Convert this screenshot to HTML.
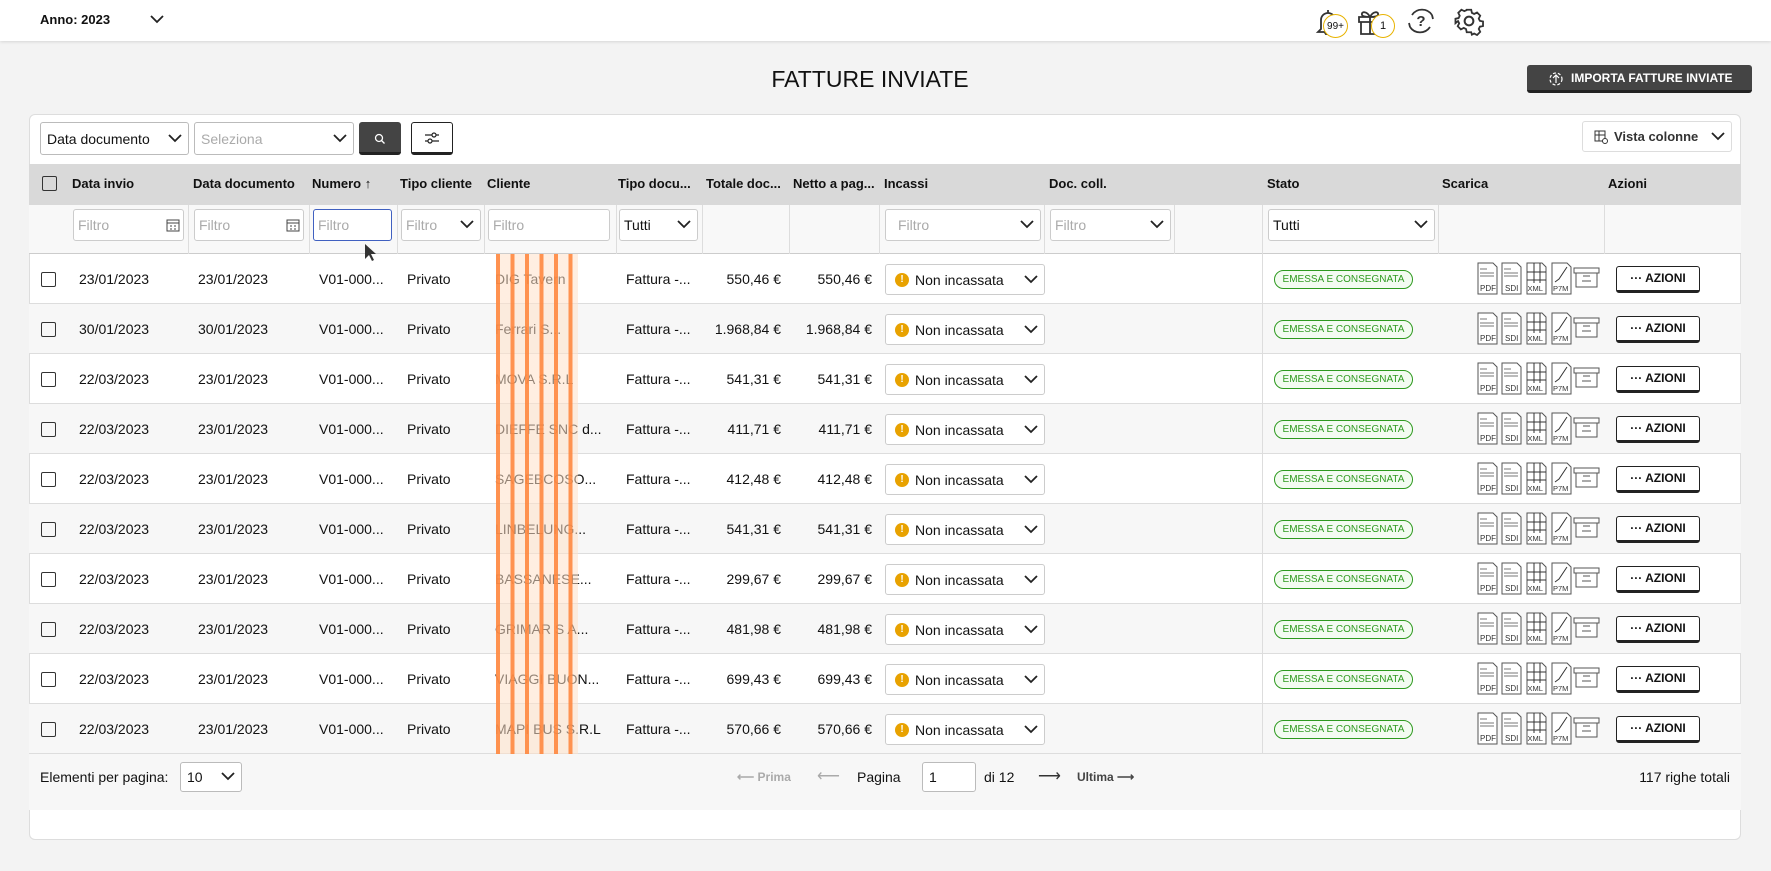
<!DOCTYPE html><html><head><meta charset="utf-8"><style>
*{box-sizing:border-box;margin:0;padding:0}
body{width:1771px;height:871px;overflow:hidden;background:#f3f3f3;font-family:"Liberation Sans",sans-serif;color:#111;position:relative}
.a{position:absolute}
.top{left:0;top:0;width:1771px;height:41px;background:#fff;box-shadow:0 1px 3px rgba(0,0,0,.12)}
.badge{position:absolute;border:1.5px solid #e8b300;background:#fff;border-radius:50%;font-size:10px;display:flex;align-items:center;justify-content:center}
.card{left:29px;top:114px;width:1712px;height:726px;background:#fff;border:1px solid #ddd;border-radius:6px}
.sel{position:absolute;border:1px solid #bbb;border-radius:3px;background:#fff;font-size:14px;display:flex;align-items:center;padding-left:6px}
.chev{position:absolute;right:6px;top:50%;margin-top:-6px}
.hdr{left:29px;top:164px;width:1712px;height:41px;background:#d9d9d9}
.h{position:absolute;top:176px;font-size:13px;font-weight:bold}
.frow{left:29px;top:205px;width:1712px;height:49px;background:#f8f8f8;border-bottom:1px solid #ccc}
.vl{position:absolute;top:205px;width:1px;height:49px;background:#ddd}
.fi{position:absolute;top:209px;height:32px;border:1px solid #ccc;border-radius:3px;background:#fff;font-size:14px;color:#aaa;padding-left:4px;display:flex;align-items:center}
.row{position:absolute;left:29px;width:1712px;height:50px;border-bottom:1px solid #ddd;font-size:14px}
.row.g{background:#f7f7f7}
.row span{position:absolute;top:17px;white-space:nowrap}
.cb{position:absolute;left:12px;top:18px;width:15px;height:15px;border:1.5px solid #333;border-radius:2px}
.inc{position:absolute;left:856px;top:10px;width:160px;height:31px;border:1px solid #ccc;border-radius:3px;background:#fff}
.inc i{position:absolute;left:9px;top:8px;width:14px;height:14px;border-radius:50%;background:#e8a200;color:#fff;font-size:10px;font-style:normal;font-weight:bold;text-align:center;line-height:14px}
.inc b{position:absolute;left:29px;top:7px;font-weight:normal}
.pill{position:absolute;left:1245px;top:16px;width:139px;height:19px;border:1px solid #2e9a1f;border-radius:10px;color:#2e9a1f;font-size:10px;text-align:center;line-height:17px;background:#f3fbf1}
.ic{position:absolute;left:1448px;top:8px}
.az{position:absolute;left:1587px;top:12px;width:84px;height:27px;border:1.5px solid #222;border-bottom-width:3px;border-radius:3px;background:#fff;font-size:12px;font-weight:bold;text-align:center;line-height:23px}
.r{text-align:right}
.stripes{position:absolute;left:496px;top:254px;width:82px;height:502px;background:repeating-linear-gradient(90deg,rgba(255,140,70,.95) 0 4px,rgba(255,225,200,.55) 4px 14.5px)}
.foot{left:29px;top:754px;width:1712px;height:56px;background:#f7f7f7}
</style></head><body>
<div class="a top"></div>
<div class="a" style="left:40px;top:12px;font-size:13px;font-weight:bold">Anno: 2023</div>
<svg class="a" style="left:150px;top:14px" width="14" height="10"><path d="M1 2l6 6 6-6" fill="none" stroke="#222" stroke-width="1.8"/></svg>
<svg class="a" style="left:1313px;top:7px" width="30" height="28"><path d="M8 22V13a7 7 0 0 1 14 0v9l3 3H5z M12 25a3 3 0 0 0 6 0 M15 3v3" fill="none" stroke="#333" stroke-width="1.8"/></svg>
<div class="badge" style="left:1323px;top:14px;width:25px;height:24px">99+</div>
<svg class="a" style="left:1356px;top:6px" width="28" height="30"><path d="M3 11h22v5H3z M5 16v12h18V16 M14 11v17 M14 11c-3-6-9-6-8-2 1 2 8 2 8 2c3-6 9-6 8-2-1 2-8 2-8 2" fill="none" stroke="#333" stroke-width="1.8"/></svg>
<div class="badge" style="left:1371px;top:14px;width:24px;height:24px;font-size:11px">1</div>
<svg class="a" style="left:1406px;top:6px" width="30" height="30"><path d="M6 9A12 12 0 0 1 26 9 M24 21A12 12 0 0 1 4 21 M4 21L3 17 M26 9l1 4" fill="none" stroke="#333" stroke-width="1.8"/><text x="15" y="20" font-size="15" font-weight="bold" text-anchor="middle" fill="#333" font-family="Liberation Sans">?</text></svg>
<svg class="a" style="left:1454px;top:6px" width="30" height="30" viewBox="0 0 24 24"><path d="M10 2h4l.6 2.8 2 1 2.6-1.3 2.8 2.8-1.3 2.6 1 2 2.8.6v4l-2.8.6-1 2 1.3 2.6-2.8 2.8-2.6-1.3-2 1L14 22h-4l-.6-2.8-2-1-2.6 1.3-2.8-2.8 1.3-2.6-1-2L0 14v-4l2.8-.6 1-2L2.5 4.8 5.3 2l2.6 1.3 2-1z" transform="scale(.9) translate(1.3 1.3)" fill="none" stroke="#333" stroke-width="1.6"/><circle cx="12" cy="12" r="3.5" fill="none" stroke="#333" stroke-width="1.6"/></svg>

<div class="a" style="left:0;width:1740px;top:66px;text-align:center;font-size:23px">FATTURE INVIATE</div>
<div class="a" style="left:1527px;top:65px;width:225px;height:28px;background:#444;border-bottom:3px solid #222;border-radius:3px;color:#fff;font-size:12px;font-weight:bold;line-height:26px;padding-left:44px">IMPORTA FATTURE INVIATE</div>
<svg class="a" style="left:1548px;top:70px" width="16" height="18"><circle cx="8" cy="9" r="6" fill="none" stroke="#fff" stroke-width="1.2" stroke-dasharray="3 2"/><path d="M8 13V5M5 8l3-3 3 3" fill="none" stroke="#fff" stroke-width="1.2"/></svg>

<div class="a card"></div>
<div class="sel" style="left:40px;top:122px;width:149px;height:33px">Data documento<svg class="chev" width="14" height="10"><path d="M1 2l6 6 6-6" fill="none" stroke="#222" stroke-width="1.8"/></svg></div>
<div class="sel" style="left:194px;top:122px;width:160px;height:33px;color:#aaa">Seleziona<svg class="chev" width="14" height="10"><path d="M1 2l6 6 6-6" fill="none" stroke="#222" stroke-width="1.8"/></svg></div>
<div class="a" style="left:359px;top:122px;width:42px;height:33px;background:#444;border-bottom:3px solid #222;border-radius:3px"></div>
<svg class="a" style="left:374px;top:133px" width="12" height="12"><circle cx="5" cy="5" r="3.5" fill="none" stroke="#fff" stroke-width="1.3"/><path d="M7.5 7.5l3 3" stroke="#fff" stroke-width="1.3"/></svg>
<div class="a" style="left:411px;top:122px;width:42px;height:33px;border:1.5px solid #222;border-bottom-width:3px;border-radius:3px;background:#fff"></div>
<svg class="a" style="left:424px;top:131px" width="16" height="14"><path d="M1 4h14M1 10h14" stroke="#222" stroke-width="1.2"/><circle cx="10" cy="4" r="2" fill="#fff" stroke="#222" stroke-width="1.2"/><circle cx="6" cy="10" r="2" fill="#fff" stroke="#222" stroke-width="1.2"/></svg>
<div class="sel" style="left:1582px;top:121px;width:150px;height:31px;border-color:#ddd;font-size:13px;font-weight:bold;padding-left:31px;color:#333">Vista colonne<svg class="chev" width="14" height="10"><path d="M1 2l6 6 6-6" fill="none" stroke="#222" stroke-width="1.8"/></svg></div>
<svg class="a" style="left:1594px;top:130px" width="14" height="14"><rect x="1" y="1" width="10" height="10" fill="none" stroke="#333"/><path d="M1 5h10M5 1v10" stroke="#333"/><circle cx="11" cy="11" r="2.5" fill="#fff" stroke="#333"/></svg>

<div class="a hdr"></div>
<div class="a" style="left:42px;top:176px;width:15px;height:15px;border:1.5px solid #333;border-radius:2px"></div>
<div class="h" style="left:72px">Data invio</div>
<div class="h" style="left:193px">Data documento</div>
<div class="h" style="left:312px">Numero &#8593;</div>
<div class="h" style="left:400px">Tipo cliente</div>
<div class="h" style="left:487px">Cliente</div>
<div class="h" style="left:618px">Tipo docu...</div>
<div class="h" style="left:706px">Totale doc...</div>
<div class="h" style="left:793px">Netto a pag...</div>
<div class="h" style="left:884px">Incassi</div>
<div class="h" style="left:1049px">Doc. coll.</div>
<div class="h" style="left:1267px">Stato</div>
<div class="h" style="left:1442px">Scarica</div>
<div class="h" style="left:1608px">Azioni</div>

<div class="a frow"></div>
<div class="vl" style="left:188px"></div><div class="vl" style="left:309px"></div><div class="vl" style="left:397px"></div><div class="vl" style="left:484px"></div><div class="vl" style="left:616px"></div><div class="vl" style="left:702px"></div><div class="vl" style="left:789px"></div><div class="vl" style="left:879px"></div><div class="vl" style="left:1044px"></div><div class="vl" style="left:1174px"></div><div class="vl" style="left:1262px"></div><div class="vl" style="left:1438px"></div><div class="vl" style="left:1604px"></div>
<div class="fi" style="left:73px;width:111px">Filtro</div>
<div class="fi" style="left:194px;width:110px">Filtro</div>
<div class="fi" style="left:313px;width:79px;border:1.5px solid #4060c0">Filtro</div>
<div class="fi" style="left:401px;width:80px">Filtro<svg class="chev" width="14" height="10"><path d="M1 2l6 6 6-6" fill="none" stroke="#222" stroke-width="1.8"/></svg></div>
<div class="fi" style="left:488px;width:122px">Filtro</div>
<div class="fi" style="left:619px;width:79px;color:#111">Tutti<svg class="chev" width="14" height="10"><path d="M1 2l6 6 6-6" fill="none" stroke="#222" stroke-width="1.8"/></svg></div>
<div class="fi" style="left:885px;width:156px;padding-left:12px">Filtro<svg class="chev" width="14" height="10"><path d="M1 2l6 6 6-6" fill="none" stroke="#222" stroke-width="1.8"/></svg></div>
<div class="fi" style="left:1050px;width:121px">Filtro<svg class="chev" width="14" height="10"><path d="M1 2l6 6 6-6" fill="none" stroke="#222" stroke-width="1.8"/></svg></div>
<div class="fi" style="left:1268px;width:167px;color:#111">Tutti<svg class="chev" width="14" height="10"><path d="M1 2l6 6 6-6" fill="none" stroke="#222" stroke-width="1.8"/></svg></div>
<svg class="a" style="left:166px;top:218px" width="14" height="14"><rect x="1" y="2" width="12" height="11" fill="none" stroke="#444"/><path d="M1 5h12M4 8h2M8 8h2M4 11h2M8 11h2" stroke="#444"/></svg>
<svg class="a" style="left:286px;top:218px" width="14" height="14"><rect x="1" y="2" width="12" height="11" fill="none" stroke="#444"/><path d="M1 5h12M4 8h2M8 8h2M4 11h2M8 11h2" stroke="#444"/></svg>
<svg class="a" style="left:364px;top:243px" width="12" height="20"><path d="M1 1v15l4-4 3 6 2-1-3-6h5z" fill="#333"/></svg>

<svg width="0" height="0" style="position:absolute"><defs>
<g id="icons" fill="#fff" stroke="#555" stroke-width="1">
<path d="M1 1h15l4 4v27H1z"/><path d="M3 7h7M3 11h14M3 14h14" stroke="#777"/><text x="3" y="29" font-size="8" fill="#333" stroke="none" font-family="Liberation Sans">PDF</text>
<path d="M25 1h15l4 4v27H25z"/><path d="M27 7h7M27 11h14M27 14h14" stroke="#777"/><text x="28" y="29" font-size="8" fill="#333" stroke="none" font-family="Liberation Sans">SDI</text>
<path d="M50 1h15l4 4v27H50z"/><path d="M50 10h19M50 18h19M57 1v20M63 1v20" stroke="#333"/><text x="50.5" y="29" font-size="7.5" fill="#333" stroke="none" font-family="Liberation Sans">XML</text>
<path d="M75 1h15l4 4v27H75z"/><path d="M78 20l4-3 4-6 4-6" stroke="#333"/><text x="76" y="29" font-size="7.5" fill="#333" stroke="none" font-family="Liberation Sans">P7M</text>
<path d="M97 6h25v5H97zM99 11h21v14H99z"/><path d="M106 14h7M105 19h9" stroke="#555"/>
</g></defs></svg>

<div class="row" style="top:254px"><div class="cb"></div><span style="left:50px">23/01/2023</span><span style="left:169px">23/01/2023</span><span style="left:290px">V01-000...</span><span style="left:378px">Privato</span><span style="left:466px">DIG Tavern</span><span style="left:597px">Fattura -...</span><span class="r" style="right:960px">550,46 €</span><span class="r" style="right:869px">550,46 €</span><div class="inc"><i>!</i><b>Non incassata</b><svg class="chev" width="14" height="10"><path d="M1 2l6 6 6-6" fill="none" stroke="#222" stroke-width="1.8"/></svg></div><div class="pill">EMESSA E CONSEGNATA</div><svg class="ic" width="124" height="34"><use href="#icons"/></svg><div class="az">··· AZIONI</div></div>
<div class="row g" style="top:304px"><div class="cb"></div><span style="left:50px">30/01/2023</span><span style="left:169px">30/01/2023</span><span style="left:290px">V01-000...</span><span style="left:378px">Privato</span><span style="left:466px">Ferrari S...</span><span style="left:597px">Fattura -...</span><span class="r" style="right:960px">1.968,84 €</span><span class="r" style="right:869px">1.968,84 €</span><div class="inc"><i>!</i><b>Non incassata</b><svg class="chev" width="14" height="10"><path d="M1 2l6 6 6-6" fill="none" stroke="#222" stroke-width="1.8"/></svg></div><div class="pill">EMESSA E CONSEGNATA</div><svg class="ic" width="124" height="34"><use href="#icons"/></svg><div class="az">··· AZIONI</div></div>
<div class="row" style="top:354px"><div class="cb"></div><span style="left:50px">22/03/2023</span><span style="left:169px">23/01/2023</span><span style="left:290px">V01-000...</span><span style="left:378px">Privato</span><span style="left:466px">MOVA S.R.L</span><span style="left:597px">Fattura -...</span><span class="r" style="right:960px">541,31 €</span><span class="r" style="right:869px">541,31 €</span><div class="inc"><i>!</i><b>Non incassata</b><svg class="chev" width="14" height="10"><path d="M1 2l6 6 6-6" fill="none" stroke="#222" stroke-width="1.8"/></svg></div><div class="pill">EMESSA E CONSEGNATA</div><svg class="ic" width="124" height="34"><use href="#icons"/></svg><div class="az">··· AZIONI</div></div>
<div class="row g" style="top:404px"><div class="cb"></div><span style="left:50px">22/03/2023</span><span style="left:169px">23/01/2023</span><span style="left:290px">V01-000...</span><span style="left:378px">Privato</span><span style="left:466px">DIEFFE SNC d...</span><span style="left:597px">Fattura -...</span><span class="r" style="right:960px">411,71 €</span><span class="r" style="right:869px">411,71 €</span><div class="inc"><i>!</i><b>Non incassata</b><svg class="chev" width="14" height="10"><path d="M1 2l6 6 6-6" fill="none" stroke="#222" stroke-width="1.8"/></svg></div><div class="pill">EMESSA E CONSEGNATA</div><svg class="ic" width="124" height="34"><use href="#icons"/></svg><div class="az">··· AZIONI</div></div>
<div class="row" style="top:454px"><div class="cb"></div><span style="left:50px">22/03/2023</span><span style="left:169px">23/01/2023</span><span style="left:290px">V01-000...</span><span style="left:378px">Privato</span><span style="left:466px">SAGEBCOSO...</span><span style="left:597px">Fattura -...</span><span class="r" style="right:960px">412,48 €</span><span class="r" style="right:869px">412,48 €</span><div class="inc"><i>!</i><b>Non incassata</b><svg class="chev" width="14" height="10"><path d="M1 2l6 6 6-6" fill="none" stroke="#222" stroke-width="1.8"/></svg></div><div class="pill">EMESSA E CONSEGNATA</div><svg class="ic" width="124" height="34"><use href="#icons"/></svg><div class="az">··· AZIONI</div></div>
<div class="row g" style="top:504px"><div class="cb"></div><span style="left:50px">22/03/2023</span><span style="left:169px">23/01/2023</span><span style="left:290px">V01-000...</span><span style="left:378px">Privato</span><span style="left:466px">LINBELUNG...</span><span style="left:597px">Fattura -...</span><span class="r" style="right:960px">541,31 €</span><span class="r" style="right:869px">541,31 €</span><div class="inc"><i>!</i><b>Non incassata</b><svg class="chev" width="14" height="10"><path d="M1 2l6 6 6-6" fill="none" stroke="#222" stroke-width="1.8"/></svg></div><div class="pill">EMESSA E CONSEGNATA</div><svg class="ic" width="124" height="34"><use href="#icons"/></svg><div class="az">··· AZIONI</div></div>
<div class="row" style="top:554px"><div class="cb"></div><span style="left:50px">22/03/2023</span><span style="left:169px">23/01/2023</span><span style="left:290px">V01-000...</span><span style="left:378px">Privato</span><span style="left:466px">BASSANESE...</span><span style="left:597px">Fattura -...</span><span class="r" style="right:960px">299,67 €</span><span class="r" style="right:869px">299,67 €</span><div class="inc"><i>!</i><b>Non incassata</b><svg class="chev" width="14" height="10"><path d="M1 2l6 6 6-6" fill="none" stroke="#222" stroke-width="1.8"/></svg></div><div class="pill">EMESSA E CONSEGNATA</div><svg class="ic" width="124" height="34"><use href="#icons"/></svg><div class="az">··· AZIONI</div></div>
<div class="row g" style="top:604px"><div class="cb"></div><span style="left:50px">22/03/2023</span><span style="left:169px">23/01/2023</span><span style="left:290px">V01-000...</span><span style="left:378px">Privato</span><span style="left:466px">GRIMAR S A...</span><span style="left:597px">Fattura -...</span><span class="r" style="right:960px">481,98 €</span><span class="r" style="right:869px">481,98 €</span><div class="inc"><i>!</i><b>Non incassata</b><svg class="chev" width="14" height="10"><path d="M1 2l6 6 6-6" fill="none" stroke="#222" stroke-width="1.8"/></svg></div><div class="pill">EMESSA E CONSEGNATA</div><svg class="ic" width="124" height="34"><use href="#icons"/></svg><div class="az">··· AZIONI</div></div>
<div class="row" style="top:654px"><div class="cb"></div><span style="left:50px">22/03/2023</span><span style="left:169px">23/01/2023</span><span style="left:290px">V01-000...</span><span style="left:378px">Privato</span><span style="left:466px">VIAGGI BUON...</span><span style="left:597px">Fattura -...</span><span class="r" style="right:960px">699,43 €</span><span class="r" style="right:869px">699,43 €</span><div class="inc"><i>!</i><b>Non incassata</b><svg class="chev" width="14" height="10"><path d="M1 2l6 6 6-6" fill="none" stroke="#222" stroke-width="1.8"/></svg></div><div class="pill">EMESSA E CONSEGNATA</div><svg class="ic" width="124" height="34"><use href="#icons"/></svg><div class="az">··· AZIONI</div></div>
<div class="row g" style="top:704px"><div class="cb"></div><span style="left:50px">22/03/2023</span><span style="left:169px">23/01/2023</span><span style="left:290px">V01-000...</span><span style="left:378px">Privato</span><span style="left:466px">MAPI BUS S.R.L</span><span style="left:597px">Fattura -...</span><span class="r" style="right:960px">570,66 €</span><span class="r" style="right:869px">570,66 €</span><div class="inc"><i>!</i><b>Non incassata</b><svg class="chev" width="14" height="10"><path d="M1 2l6 6 6-6" fill="none" stroke="#222" stroke-width="1.8"/></svg></div><div class="pill">EMESSA E CONSEGNATA</div><svg class="ic" width="124" height="34"><use href="#icons"/></svg><div class="az">··· AZIONI</div></div>
<div class="a" style="left:1262px;top:254px;width:1px;height:500px;background:#ddd"></div>
<div class="stripes"></div>

<div class="a foot"></div>
<div class="a" style="left:40px;top:769px;font-size:14px">Elementi per pagina:</div>
<div class="sel" style="left:180px;top:762px;width:62px;height:30px">10<svg class="chev" width="14" height="10"><path d="M1 2l6 6 6-6" fill="none" stroke="#222" stroke-width="1.8"/></svg></div>
<div class="a" style="left:737px;top:770px;font-size:12px;font-weight:bold;color:#aaa">&#10229; Prima</div>
<div class="a" style="left:817px;top:766px;font-size:16px;color:#aaa">&#10229;</div>
<div class="a" style="left:857px;top:769px;font-size:14px">Pagina</div>
<div class="sel" style="left:922px;top:762px;width:54px;height:30px">1</div>
<div class="a" style="left:984px;top:769px;font-size:14px">di 12</div>
<div class="a" style="left:1038px;top:766px;font-size:16px;color:#333">&#10230;</div>
<div class="a" style="left:1077px;top:770px;font-size:12px;font-weight:bold;color:#444">Ultima &#10230;</div>
<div class="a" style="left:1600px;width:130px;top:769px;font-size:14px;text-align:right">117 righe totali</div>
</body></html>
